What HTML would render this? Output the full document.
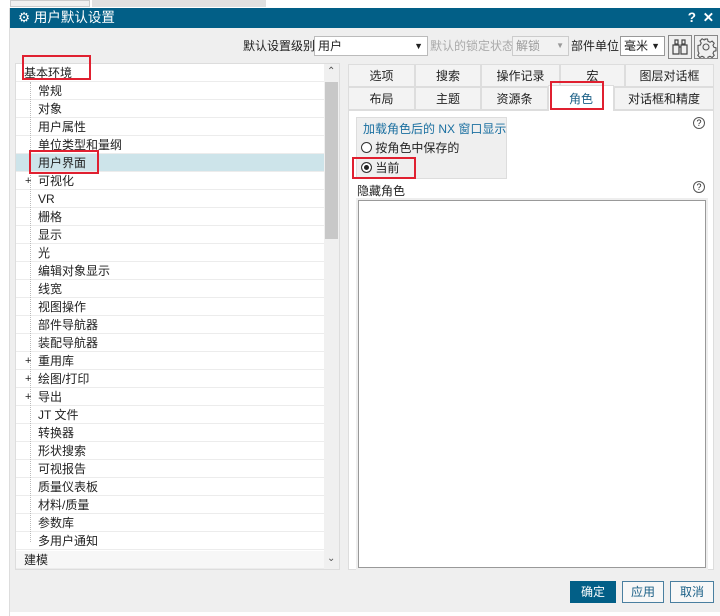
<!DOCTYPE html><html><head><meta charset="utf-8"><style>
*{box-sizing:border-box;margin:0;padding:0}
body{width:720px;height:616px;overflow:hidden;background:#fff;font-family:"Liberation Sans","Noto Sans CJK SC",sans-serif;font-size:12px;color:#222;position:relative}
.a{position:absolute}
.row{position:absolute;left:16px;width:308px;height:18px;line-height:18px;border-bottom:1px solid #ececec}
.tab{position:absolute;height:23px;line-height:22px;text-align:center;border:1px solid #ddd;background:#f3f3f3;font-size:12px}
.btn{position:absolute;top:581px;height:22px;line-height:20px;text-align:center;border:1px solid #4a7fa0;background:#f7f7f7;color:#1a5f86}
</style></head><body>
<div class="a" style="left:0;top:0;width:720px;height:8px;background:#fff"></div>
<div class="a" style="left:10px;top:0;width:80px;height:7px;background:#f0f0f0;border:1px solid #ccc"></div>
<div class="a" style="left:92px;top:0;width:174px;height:7px;background:#e0e0e0"></div>
<div class="a" style="left:0;top:8px;width:10px;height:608px;background:#fff;border-right:1px solid #ddd"></div>
<div class="a" style="left:10px;top:8px;width:710px;height:20px;background:#025f87;color:#fff;font-size:13.5px;line-height:20px;padding-left:8px">⚙ 用户默认设置<span style="position:absolute;right:24px;font-weight:bold">?</span><span style="position:absolute;right:6px;font-weight:bold">✕</span></div>
<div class="a" style="left:10px;top:28px;width:710px;height:584px;background:#efefef"></div>
<div class="a" style="left:10px;top:612px;width:710px;height:4px;background:#fff"></div>
<!-- toolbar -->
<div class="a" style="left:243px;top:38px;line-height:16px">默认设置级别</div>
<div class="a" style="left:314px;top:36px;width:114px;height:20px;background:#fff;border:1px solid #bbb;line-height:18px;padding-left:3px">用户<span style="position:absolute;right:4px;font-size:9px">▼</span></div>
<div class="a" style="left:430px;top:38px;line-height:16px;color:#aaa">默认的锁定状态</div>
<div class="a" style="left:512px;top:36px;width:57px;height:20px;background:#f2f2f2;border:1px solid #ccc;line-height:18px;padding-left:3px;color:#999">解锁<span style="position:absolute;right:4px;font-size:8px">▼</span></div>
<div class="a" style="left:571px;top:38px;line-height:16px">部件单位</div>
<div class="a" style="left:620px;top:36px;width:45px;height:20px;background:#fff;border:1px solid #999;line-height:18px;padding-left:3px">毫米<span style="position:absolute;right:4px;font-size:9px">▼</span></div>
<div class="a" style="left:668px;top:35px;width:24px;height:24px;border:1px solid #888"><svg width="22" height="22" viewBox="0 0 22 22" fill="none" stroke="#444" stroke-width="1.2"><path d="M6 4h3v4H6zM13 4h3v4h-3zM4 9h6v9H4zM12 9h6v9h-6zM10 11h2"/></svg></div>
<div class="a" style="left:694px;top:35px;width:24px;height:24px;border:1px solid #888"><svg width="22" height="22" viewBox="0 0 22 22" fill="none" stroke="#555" stroke-width="1.1"><circle cx="11" cy="11" r="3"/><path d="M9.5 3h3l.5 2.3 2 1 2.1-1.2 2.1 2.1-1.2 2.1.9 2 2.1.5v3l-2.1.5-.9 2 1.2 2.1-2.1 2.1-2.1-1.2-2 .9-.5 2.3h-3l-.5-2.3-2-.9-2.1 1.2-2.1-2.1 1.2-2.1-.9-2L3 12.5v-3l2.3-.5.9-2-1.2-2.1 2.1-2.1 2.1 1.2 2-1z"/></svg></div>
<!-- tree -->
<div class="a" style="left:15px;top:63px;width:325px;height:507px;background:#fff;border:1px solid #ddd"></div>
<div class="a" style="left:324px;top:64px;width:15px;height:505px;background:#f0f0f0"></div>
<div class="a" style="left:325px;top:82px;width:13px;height:157px;background:#c8c8c8"></div>
<div class="a" style="left:327px;top:66px;font-size:10px;color:#555">⌃</div>
<div class="a" style="left:327px;top:553px;font-size:10px;color:#555">⌄</div>
<div class="row" style="top:64px;padding-left:8px">基本环境</div>
<div class="row" style="top:82px;padding-left:22px">常规</div>
<div class="row" style="top:100px;padding-left:22px">对象</div>
<div class="row" style="top:118px;padding-left:22px">用户属性</div>
<div class="row" style="top:136px;padding-left:22px">单位类型和量纲</div>
<div class="row" style="top:154px;padding-left:22px;background:#cde4ea">用户界面</div>
<div class="row" style="top:172px;padding-left:22px"><span style="position:absolute;left:9px;font-size:11px">+</span>可视化</div>
<div class="row" style="top:190px;padding-left:22px">VR</div>
<div class="row" style="top:208px;padding-left:22px">栅格</div>
<div class="row" style="top:226px;padding-left:22px">显示</div>
<div class="row" style="top:244px;padding-left:22px">光</div>
<div class="row" style="top:262px;padding-left:22px">编辑对象显示</div>
<div class="row" style="top:280px;padding-left:22px">线宽</div>
<div class="row" style="top:298px;padding-left:22px">视图操作</div>
<div class="row" style="top:316px;padding-left:22px">部件导航器</div>
<div class="row" style="top:334px;padding-left:22px">装配导航器</div>
<div class="row" style="top:352px;padding-left:22px"><span style="position:absolute;left:9px;font-size:11px">+</span>重用库</div>
<div class="row" style="top:370px;padding-left:22px"><span style="position:absolute;left:9px;font-size:11px">+</span>绘图/打印</div>
<div class="row" style="top:388px;padding-left:22px"><span style="position:absolute;left:9px;font-size:11px">+</span>导出</div>
<div class="row" style="top:406px;padding-left:22px">JT 文件</div>
<div class="row" style="top:424px;padding-left:22px">转换器</div>
<div class="row" style="top:442px;padding-left:22px">形状搜索</div>
<div class="row" style="top:460px;padding-left:22px">可视报告</div>
<div class="row" style="top:478px;padding-left:22px">质量仪表板</div>
<div class="row" style="top:496px;padding-left:22px">材料/质量</div>
<div class="row" style="top:514px;padding-left:22px">参数库</div>
<div class="row" style="top:532px;padding-left:22px">多用户通知</div>
<div class="row" style="top:551px;padding-left:8px;background:#f7f7f7">建模</div>
<div class="a" style="left:30px;top:82px;width:0;height:460px;border-left:1px dotted #bbb"></div>
<div class="a" style="left:22px;top:55px;width:69px;height:25px;border:2px solid #e02030"></div>
<div class="a" style="left:29px;top:150px;width:70px;height:24px;border:2px solid #e02030"></div>
<!-- right panel -->
<div class="a" style="left:348px;top:110px;width:366px;height:460px;background:#fff;border:1px solid #ddd"></div>
<div class="tab" style="left:348px;top:64px;width:67px">选项</div>
<div class="tab" style="left:415px;top:64px;width:66px">搜索</div>
<div class="tab" style="left:481px;top:64px;width:79px">操作记录</div>
<div class="tab" style="left:560px;top:64px;width:65px">宏</div>
<div class="tab" style="left:625px;top:64px;width:89px">图层对话框</div>
<div class="tab" style="left:348px;top:87px;width:67px">布局</div>
<div class="tab" style="left:415px;top:87px;width:66px">主题</div>
<div class="tab" style="left:481px;top:87px;width:67px">资源条</div>
<div class="tab" style="left:614px;top:87px;width:100px">对话框和精度</div>
<div class="tab" style="left:548px;top:85px;width:66px;height:26px;background:#fff;border-bottom:none;color:#1a5f86;line-height:26px">角色</div>
<div class="a" style="left:550px;top:81px;width:54px;height:29px;border:2px solid #e02030"></div>
<div class="a" style="left:356px;top:117px;width:151px;height:62px;background:#efefef;border:1px solid #ddd"></div>
<div class="a" style="left:363px;top:120px;color:#1a6fa0">加载角色后的 NX 窗口显示</div>
<div class="a" style="left:361px;top:139px"><span style="display:inline-block;width:11px;height:11px;border:1px solid #333;border-radius:50%;background:#fff;vertical-align:-1px"></span> 按角色中保存的</div>
<div class="a" style="left:361px;top:159px"><span style="display:inline-block;width:11px;height:11px;border:1px solid #333;border-radius:50%;vertical-align:-1px;box-shadow:inset 0 0 0 2px #fff;background:#222"></span> 当前</div>
<div class="a" style="left:352px;top:157px;width:64px;height:22px;border:2px solid #e02030"></div>
<div class="a" style="left:693px;top:117px;width:12px;height:12px;border:1px solid #555;border-radius:50%;font-size:9px;text-align:center;line-height:10px">?</div>
<div class="a" style="left:693px;top:181px;width:12px;height:12px;border:1px solid #555;border-radius:50%;font-size:9px;text-align:center;line-height:10px">?</div>
<div class="a" style="left:357px;top:182px">隐藏角色</div>
<div class="a" style="left:358px;top:200px;width:348px;height:368px;background:#fff;border:1px solid #999;outline:2px solid #eee"></div>
<!-- buttons -->
<div class="btn" style="left:570px;width:46px;background:#025f87;color:#fff;border-color:#025f87">确定</div>
<div class="btn" style="left:622px;width:42px">应用</div>
<div class="btn" style="left:670px;width:44px">取消</div>
</body></html>
